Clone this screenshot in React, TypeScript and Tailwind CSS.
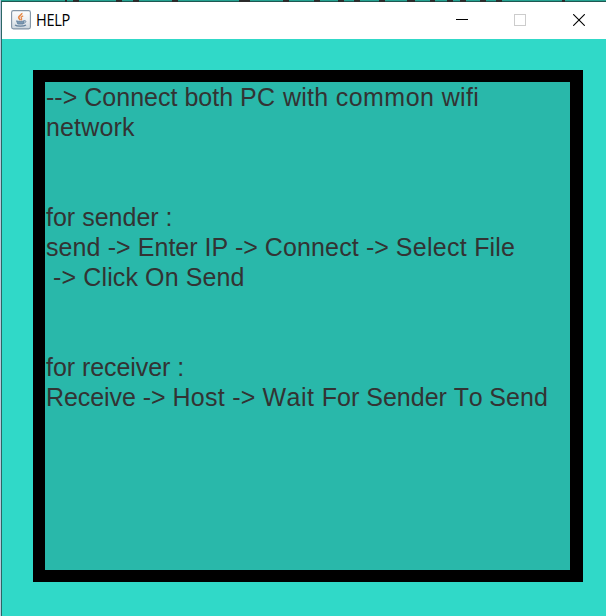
type Run = [text: string, tracking: string];

const helpLines: Run[][] = [
  [
    ['--> Connect both ', 'tracking-[0.01px]'],
    ['PC ', 'tracking-[0.4px]'],
    ['with ', 'tracking-[0.3px]'],
    ['common ', 'tracking-[0.44px]'],
    ['wifi', 'tracking-[0.35px]'],
  ],
  [['network', 'tracking-[0.15px]']],
  [],
  [],
  [['for sender :', 'tracking-[0.01px]']],
  [
    ['send -> ', 'tracking-[0.1px]'],
    ['Enter IP -> ', 'tracking-[-0.01px]'],
    ['Connect ', 'tracking-[0.12px]'],
    ['-> ', 'tracking-[0.01px]'],
    ['Select ', 'tracking-[0.27px]'],
    ['File', 'tracking-[0.2px]'],
  ],
  [[' -> Click On Send', 'tracking-[0.12px]']],
  [],
  [],
  [['for receiver :', 'tracking-[-0.06px]']],
  [
    ['Receive -> ', 'tracking-[-0.07px]'],
    ['Host ', 'tracking-[0.3px]'],
    ['-> ', 'tracking-[0.15px]'],
    ['Wait ', 'tracking-[0.44px]'],
    ['For Sender ', 'tracking-[0.01px]'],
    ['To ', 'tracking-[-0.25px]'],
    ['Send', 'tracking-[0.12px]'],
  ],
];

// Lower edges of the lettering on the window behind: [x, width]
const letterEdges = [
  [65, 2], [73, 6], [116, 6], [133, 6], [172, 6], [239, 11], [283, 6],
  [314, 6], [338, 6], [354, 6], [379, 6], [407, 8], [430, 5], [447, 6],
  [460, 6], [480, 6], [496, 6], [562, 3],
];

function WindowBehind() {
  return (
    <svg className="block h-[2px] w-full shrink-0 bg-[#25a291]" viewBox="0 0 606 2" shapeRendering="crispEdges">
      <rect x="0" y="1" width="606" height="1" fill="#1f5852" />
      <rect x="0" y="0" width="1" height="2" fill="#b9c8dc" />
      {letterEdges.map(([x, w]) => (
        <rect key={x} x={x} y="0" width={w} height="2" fill="#2b2b2b" />
      ))}
    </svg>
  );
}

function JavaIcon() {
  return (
    <svg className="block size-5" viewBox="0 0 20 20" fill="none">
      <defs>
        <linearGradient id="tile" x1="0" y1="0" x2="0" y2="1">
          <stop offset="0" stopColor="#fdfdfe" />
          <stop offset="0.5" stopColor="#eceff2" />
          <stop offset="1" stopColor="#cbd5dd" />
        </linearGradient>
      </defs>
      <rect x="0.6" y="0.6" width="18.8" height="18.3" rx="1.8" fill="url(#tile)" stroke="#8294a5" strokeWidth="1.1" />
      <path d="M10.8 3C11.2 5 7.4 5.7 7.7 7.7C7.8 8.7 9 9.2 9.3 10.2" stroke="#e58b4b" strokeWidth="1.7" />
      <path d="M12.2 5.8C10.4 6.5 9.6 7.4 10.5 8.4C10.9 9 10.5 9.8 10 10.2" stroke="#e58b4b" strokeWidth="1.3" />
      <path d="M5.5 10.8C7 11.6 11.5 11.5 13 10.8L12.2 14H6.8Z" fill="#7c98b1" stroke="#5f7f9c" strokeWidth="0.8" />
      <path d="M13 10.8C15.8 10.2 15.4 12.8 12.4 13.3" stroke="#6684a0" strokeWidth="1" />
      <path d="M4 15C6 16.5 12.8 16.4 15 15" stroke="#64819c" strokeWidth="1.3" />
    </svg>
  );
}

function TitleBar() {
  return (
    <header className="flex h-[37px] shrink-0 items-start bg-white">
      <div className="ml-[9px] mt-[8px]">
        <JavaIcon />
      </div>
      <h1 className="ml-[5px] mt-[8px] w-[40px] origin-left scale-x-[0.94] font-['Open_Sans','Noto_Sans',sans-serif] text-[15.5px] leading-5 tracking-[-0.3px] text-black">
        HELP
      </h1>
      <div className="ml-auto mr-[21px] mt-[12px] flex gap-[46px]">
        <button aria-label="Minimize">
          <svg className="block h-3 w-3 -translate-x-px" viewBox="0 0 12 12" shapeRendering="crispEdges">
            <rect y="5" width="12" height="1" fill="#000" />
          </svg>
        </button>
        <button aria-label="Maximize" disabled>
          <svg className="block h-3 w-3 -translate-x-px" viewBox="0 0 12 12">
            <rect x="0.5" y="0.5" width="11" height="11" fill="none" stroke="#ccc" />
          </svg>
        </button>
        <button aria-label="Close">
          <svg className="block h-3 w-3" viewBox="0 0 12 12">
            <path d="M0.2 0.2L11.8 11.8M11.8 0.2L0.2 11.8" stroke="#000" strokeWidth="1.1" />
          </svg>
        </button>
      </div>
    </header>
  );
}

export default function App() {
  return (
    <div className="flex h-[616px] w-[606px] flex-col overflow-hidden bg-[#30d9c8]">
      <WindowBehind />
      <div className="flex grow">
        <div className="w-px bg-[#b9c8dc]" />
        <div className="w-px bg-[#2b6765]" />
        <div className="flex grow flex-col">
          <TitleBar />
          <main className="grow pl-[31px] pt-[31px]">
            <section className="h-[512px] w-[550px] border-12 border-r-13 border-black bg-[#29b8aa] pl-px font-['Liberation_Sans',Arial,sans-serif] text-[25px] leading-[30px] text-[#333] [font-kerning:none]">
              {helpLines.map((runs, i) => (
                <p key={i} className="h-[30px] whitespace-pre">
                  {runs.map(([text, tracking], j) => (
                    <span key={j} className={tracking}>{text}</span>
                  ))}
                </p>
              ))}
            </section>
          </main>
        </div>
      </div>
    </div>
  );
}
